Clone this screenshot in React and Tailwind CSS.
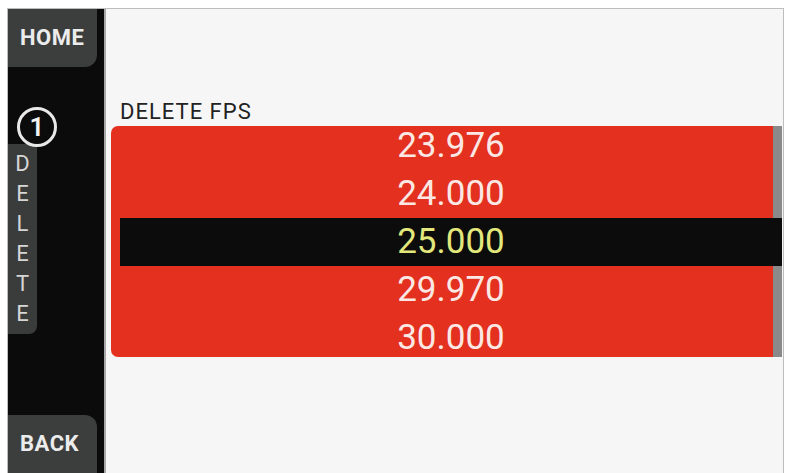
const fpsList = ['23.976', '24.000', '25.000', '29.970', '30.000'];
const selected = '25.000';

function SideButton({ label, corner }) {
  return (
    <div
      className={`flex h-[58px] w-[89px] items-center bg-[#3c3e3e] pl-[12px] text-[22px] font-bold leading-none tracking-[0.5px] text-[#ececec] ${corner}`}
    >
      {label}
    </div>
  );
}

function Sidebar() {
  return (
    <div className="flex w-[96px] shrink-0 flex-col bg-[#0b0b0b]">
      <SideButton label="HOME" corner="rounded-br-[12px]" />

      <div className="relative z-10 ml-[9px] mt-[40px] -mb-[3px] flex h-[40px] w-[40px] items-center justify-center rounded-full border-[3px] border-[#e8e8e8] bg-[#0b0b0b] text-[26px] font-semibold leading-none text-[#f2f2f2]">
        1
      </div>

      <div className="flex h-[190px] w-[29px] flex-col items-center rounded-br-[8px] bg-[#3a3c3c] pt-[5px] text-[22px] leading-[30px] text-[#d6d6d6]">
        {'DELETE'.split('').map((ch, i) => (
          <span key={i}>{ch}</span>
        ))}
      </div>

      <div className="flex-1" />
      <SideButton label="BACK" corner="rounded-tr-[12px]" />
    </div>
  );
}

function FpsList() {
  return (
    <div className="relative ml-[5px] mr-[1px] flex h-[231px] flex-col justify-center overflow-hidden rounded-l-[7px] bg-[#e3301f]">
      {/* scroll track on the right edge */}
      <div className="absolute bottom-0 right-0 top-0 w-[9px] bg-[#8a8a8a]" />
      {fpsList.map((fps) => {
        const active = fps === selected;
        return (
          <div
            key={fps}
            className={`relative z-10 ml-[9px] flex h-[48px] shrink-0 items-center justify-center text-[35px] leading-[48px] ${
              active ? 'bg-[#0c0c0c] text-[#e3e87c]' : 'text-[#fbe8e4]'
            }`}
          >
            {fps}
          </div>
        );
      })}
    </div>
  );
}

export default function App() {
  return (
    <div
      className="flex h-[473px] w-[787px] bg-white pl-[7px] pr-[3px] pt-[8px]"
      style={{ fontFamily: 'Roboto, "Liberation Sans", sans-serif' }}
    >
      <div className="flex flex-1 border-l border-r border-t border-[#bdbdbd]">
        <Sidebar />
        <div className="flex flex-1 flex-col border-l-2 border-[#a8a8a8] bg-[#f6f6f6] pt-[92px]">
          <div className="ml-[14px] h-[21px] text-[22px] leading-[21px] tracking-[1px] text-[#222222]">
            DELETE FPS
          </div>
          <div className="mt-[4px]">
            <FpsList />
          </div>
        </div>
      </div>
    </div>
  );
}
